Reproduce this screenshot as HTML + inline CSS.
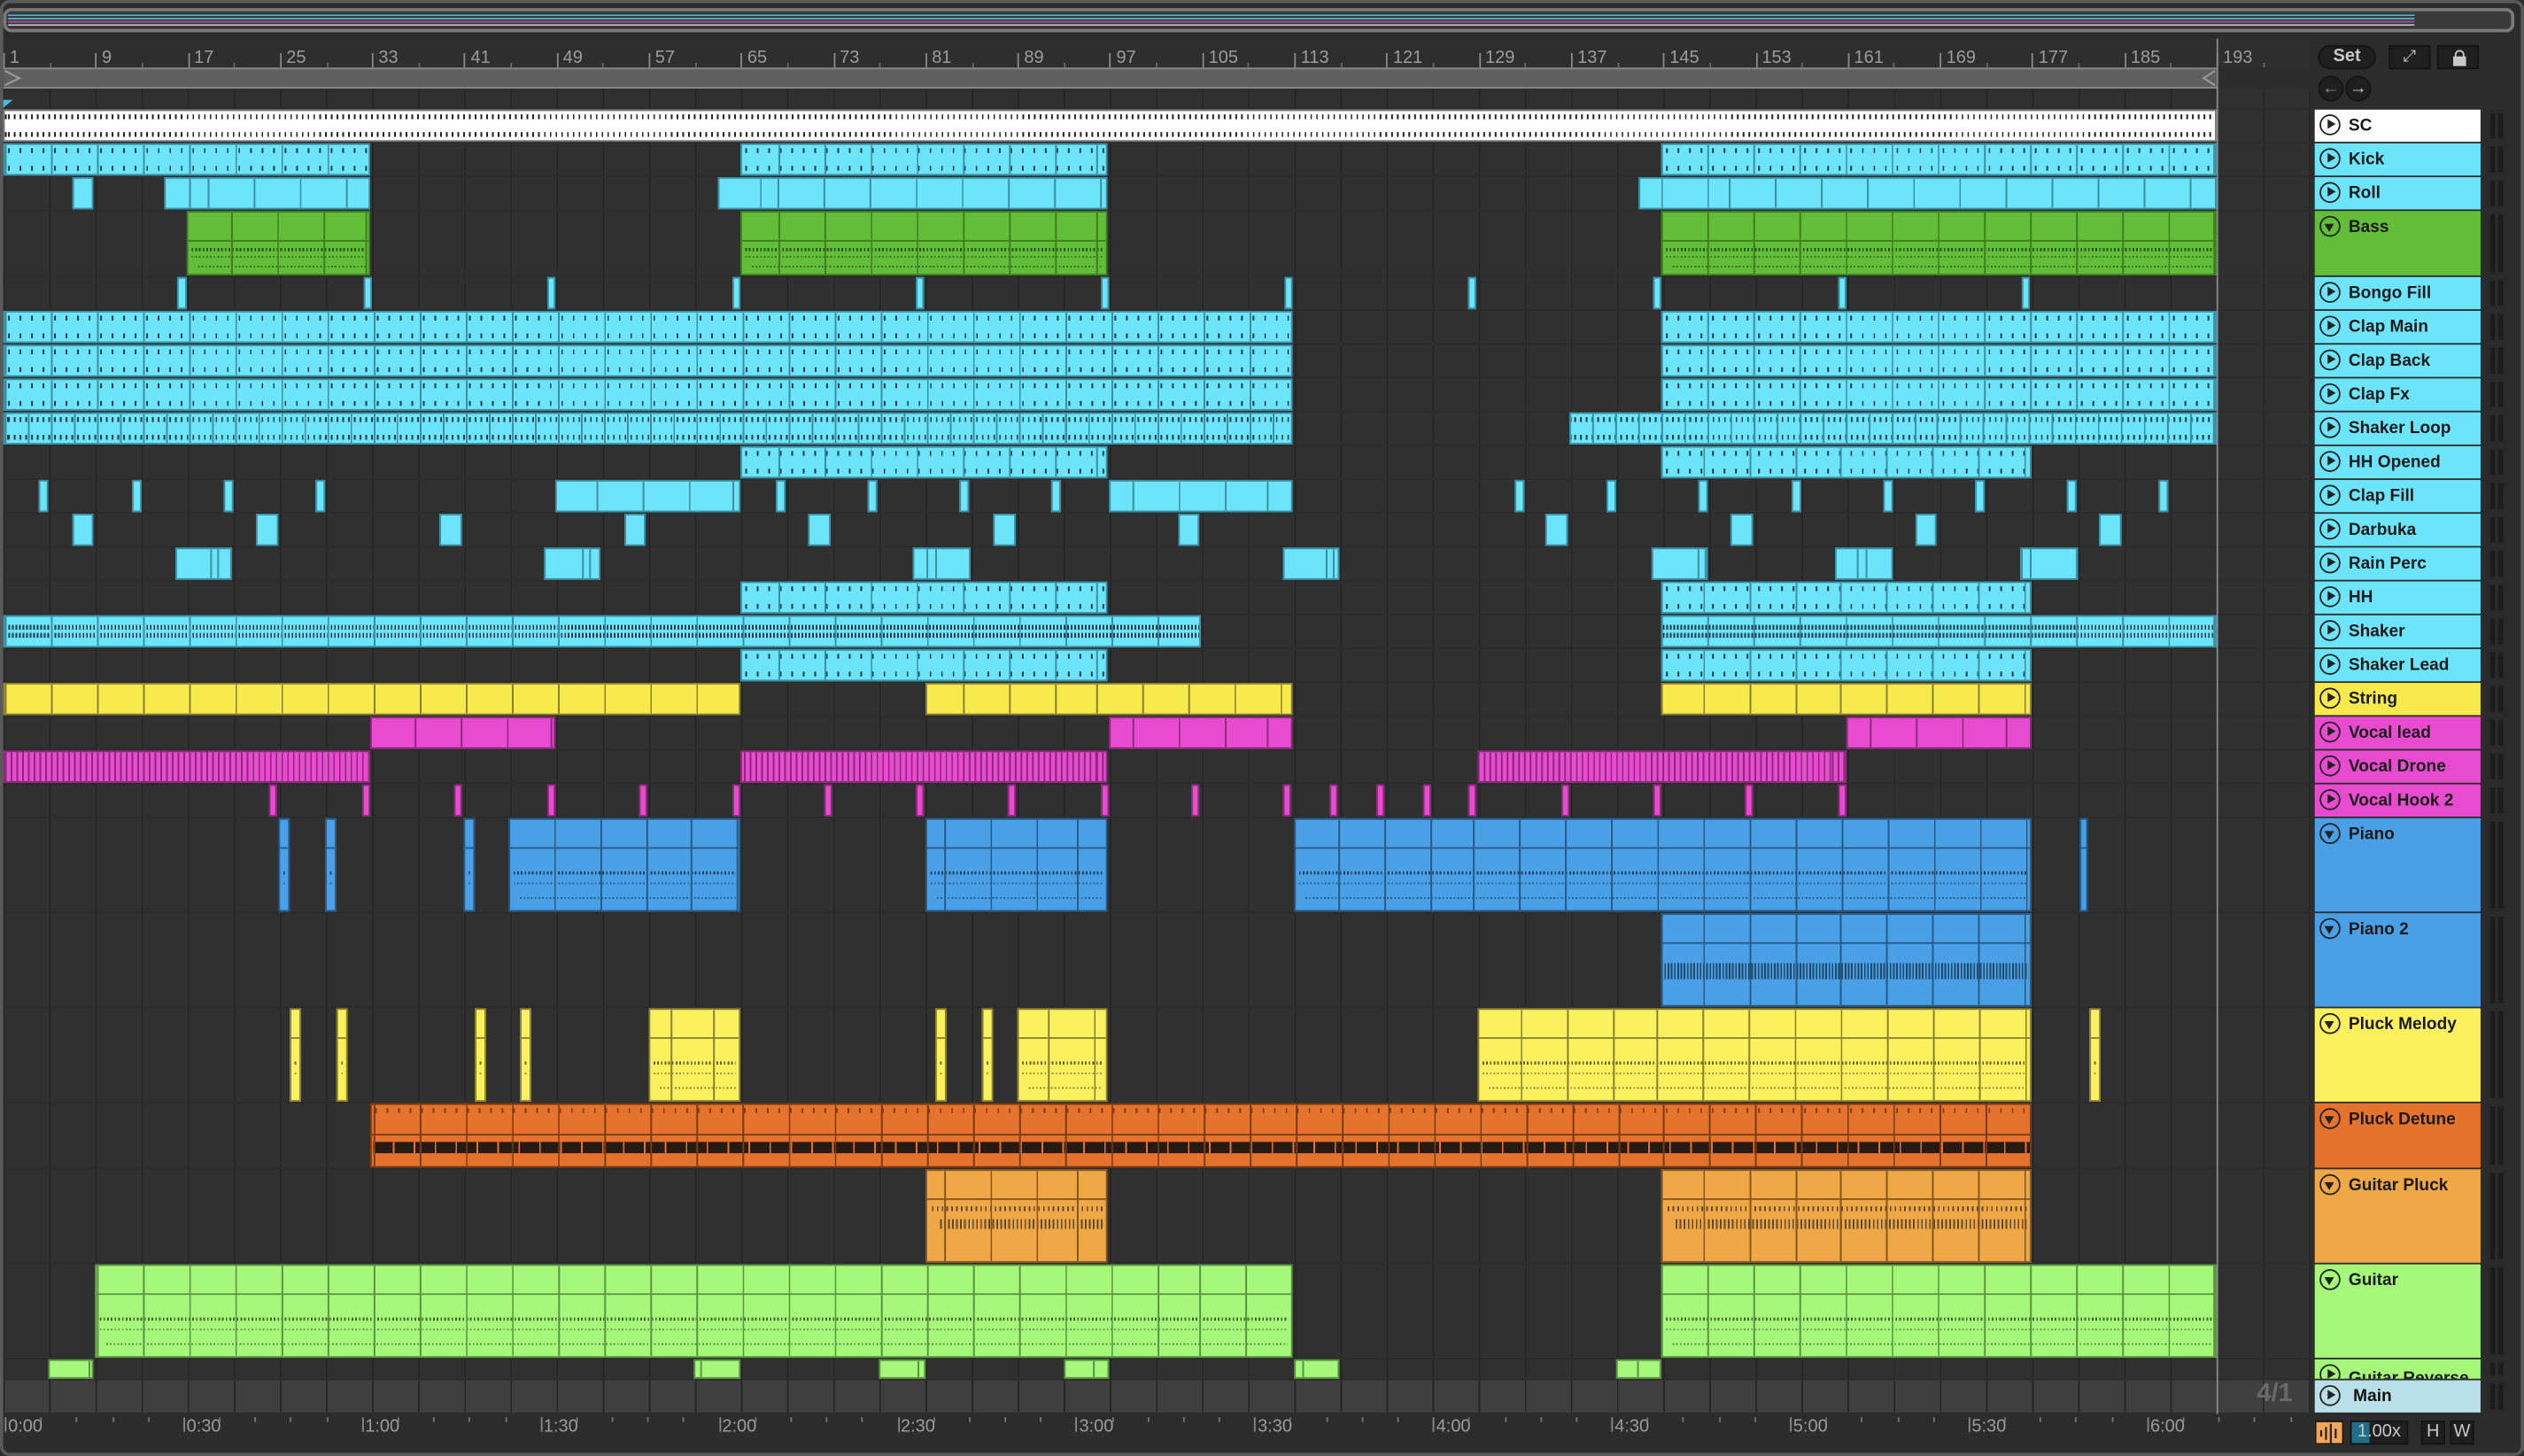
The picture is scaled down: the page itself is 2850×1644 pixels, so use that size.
<!DOCTYPE html>
<html><head><meta charset="utf-8">
<style>
*{box-sizing:border-box;margin:0;padding:0}
html,body{width:2850px;height:1644px;overflow:hidden;background:#262626}
#w{position:absolute;left:0;top:0;width:1568px;height:904px;transform:scale(1.81760,1.81858);transform-origin:0 0;background:#2c2c2c;font-family:"Liberation Sans",sans-serif;overflow:hidden}
.a{position:absolute}
.lane{position:absolute;left:2px;width:1433px;background-color:#303030;background-image:repeating-linear-gradient(90deg,#262626 0 1px,transparent 1px 28.645px)}
.clip{position:absolute;overflow:hidden}
.hd{position:absolute;left:1438px;width:103px;font-weight:bold;font-size:10.5px;color:#1a1a1a;padding-left:21px;line-height:20px;overflow:hidden}
.ic{position:absolute;left:3px;top:3px;width:13px;height:13px;border:1.3px solid #222;border-radius:50%}
.ic:after{content:"";position:absolute;left:3.5px;top:2.2px;border-left:5px solid #222;border-top:3.2px solid transparent;border-bottom:3.2px solid transparent}
.ic.d:after{left:2px;top:3.5px;border-top:5px solid #222;border-left:3.2px solid transparent;border-right:3.2px solid transparent;border-bottom:0}
.mt{position:absolute;left:1544px;width:13px;background:#2a2a2a}
.mt:before,.mt:after{content:"";position:absolute;top:2px;bottom:2px;width:3px;background:#1c1c1c;left:3px}
.mt:after{left:8px}
.rn{position:absolute;top:30px;font-size:11px;color:#9c9c9c}
.tk{position:absolute;width:1px;background:#8a8a8a}
.btn{position:absolute;background:#1f1f1f;border:1px solid #141414;color:#c8c8c8;font-size:11px;text-align:center}
</style></head><body><div id="w">
<!-- overview -->
<div class="a" style="left:2px;top:5px;width:1560px;height:15px;border:2px solid #7a7a7a;border-radius:5px;background:#3a3a3a"></div>
<div class="a" style="left:5px;top:8px;width:1495px;height:9px;background:linear-gradient(#3a3a3a 0 1px,#56b9cf 1px 2px,#3a3a3a 2px 3px,#4aa8c0 3px 4px,#3a3a3a 4px 5px,#a94a9c 5px 6px,#3a3a3a 6px 7px,#cfcfcf 7px 8px,#3a3a3a 8px 9px)"></div>
<!-- ruler -->
<div class="a" style="left:0;top:24px;width:1435px;height:18px;background:#2e2e2e"></div>
<div class="a" style="left:2px;top:42px;width:1375px;height:13px;background:#5f5f5f;border-top:1px solid #8a8a8a;border-bottom:1px solid #8a8a8a"></div>
<svg class="a" style="left:2px;top:43px" width="12" height="11"><path d="M1 1 L10 5.5 L1 10" fill="none" stroke="#999" stroke-width="1.2"/></svg>
<svg class="a" style="left:1367px;top:43px" width="10" height="11"><path d="M9 1 L2 5.5 L9 10" fill="none" stroke="#999" stroke-width="1.2"/></svg>
<div class="a" style="left:2px;top:55px;width:1433px;height:12px;background-color:#303030;background-image:repeating-linear-gradient(90deg,#262626 0 1px,transparent 1px 28.645px)"></div>
<div class="a" style="left:2px;top:62px;border-left:6px solid #4ab8d8;border-bottom:5px solid transparent"></div>
<div id="g"></div>
<!-- right column -->
<div class="a" style="left:1435px;top:24px;width:133px;height:44px;background:#2c2c2c"></div>
<div class="btn" style="left:1440px;top:28px;width:36px;height:15px;border-radius:8px;line-height:13px;font-weight:bold">Set</div>
<div class="btn" style="left:1484px;top:28px;width:26px;height:15px;line-height:13px;font-size:10px">⤢</div>
<div class="btn" style="left:1514px;top:28px;width:26px;height:15px"><div class="a" style="left:9px;top:6px;width:8px;height:6px;background:#c8c8c8"></div><div class="a" style="left:10px;top:2px;width:6px;height:6px;border:1.5px solid #c8c8c8;border-radius:3px 3px 0 0"></div></div>
<div class="btn" style="left:1440px;top:47px;width:16px;height:16px;border-radius:50%;line-height:14px;color:#888">←</div>
<div class="btn" style="left:1457px;top:47px;width:16px;height:16px;border-radius:50%;line-height:14px;font-weight:bold">→</div>
<div class="a" style="left:1402px;top:857px;font-size:16px;font-weight:bold;color:#6a6a6a">4/1</div>
<div class="a" style="left:1377px;top:24px;width:1px;height:856px;background:#8a8a8a"></div>
<!-- bottom -->
<div class="a" style="left:0;top:878px;width:1568px;height:26px;background:#2c2c2c"></div>
<div id="tb"></div>
<div class="a" style="left:1438px;top:882px;width:18px;height:15px;background:#f3a657;border:1px solid #141414"><svg width="16" height="13"><path d="M3 5v4M6 3v8M9 1v12M12 4v6" stroke="#222" stroke-width="1.2"/></svg></div>
<div class="btn" style="left:1460px;top:882px;width:36px;height:15px;line-height:13px;font-size:11px;background:linear-gradient(90deg,#1f6f86 0 11px,#1f1f1f 11px)">1.00x</div>
<div class="btn" style="left:1504px;top:882px;width:15px;height:15px;line-height:13px">H</div>
<div class="btn" style="left:1522px;top:882px;width:15px;height:15px;line-height:13px">W</div>
<div class="a" style="left:0;top:0;width:1568px;height:904px;border:2px solid #5a5a5a;border-radius:6px;pointer-events:none"></div>
</div>
<script>
var g=document.getElementById('g'),h='';
var B=57.29;
for(var k=0;k<=24;k++){var x=2+k*B;h+='<div class="tk" style="left:'+x+'px;top:33px;height:9px"></div><div class="rn" style="left:'+(x+4)+'px">'+(1+8*k)+'</div>';
 h+='<div class="tk" style="left:'+(x+B/2)+'px;top:39px;height:3px;background:#666"></div>';}
var C='#6ce4fa',CB='#3c8fa3',GR='#62bd38',GRB='#3f7f22',Y='#f8ea4c',YB='#8a8030',M='#e84bd0',MB='#8a2a7a',BL='#4aa0e6',BLB='#265a87',PY='#fbf05e',O='#e5732e',OB='#7a3a12',GP='#f0a746',GPB='#85561d',LG='#a6f87a',LGB='#5a9440';
var rows=[
['SC',68,20,'#ffffff','#777',[[2,1377]],'sc'],
['Kick',89,20,C,CB,[[2,230],[460,688],[1032,1377]],'k'],
['Roll',110,20,C,CB,[[45,58],[102,230],[446,688],[1018,1377]]],
['Bass',131,40,GR,GRB,[[116,230],[460,688],[1032,1377]],'tall'],
['Bongo Fill',172,20,C,CB,[[110,116],[226,231],[340,345],[455,460],[569,574],[684,689],[798,803],[912,917],[1027,1032],[1142,1147],[1256,1261]]],
['Clap Main',193,20,C,CB,[[2,803],[1032,1377]],'k'],
['Clap Back',214,20,C,CB,[[2,803],[1032,1377]],'k'],
['Clap Fx',235,20,C,CB,[[2,803],[1032,1377]],'k'],
['Shaker Loop',256,20,C,CB,[[2,803],[975,1377]],'k2'],
['HH Opened',277,20,C,CB,[[460,688],[1032,1262]],'k'],
['Clap Fill',298,20,C,CB,[[24,30],[82,88],[139,145],[196,202],[345,460],[482,488],[539,545],[596,602],[653,659],[689,803],[941,947],[998,1004],[1055,1061],[1113,1119],[1170,1176],[1227,1233],[1284,1290],[1341,1347]]],
['Darbuka',319,20,C,CB,[[45,58],[159,173],[273,287],[388,401],[502,516],[617,631],[732,745],[960,974],[1075,1089],[1190,1203],[1304,1318]]],
['Rain Perc',340,20,C,CB,[[109,144],[338,373],[567,603],[797,832],[1026,1061],[1140,1176],[1255,1291]]],
['HH',361,20,C,CB,[[460,688],[1032,1262]],'k'],
['Shaker',382,20,C,CB,[[2,746],[1032,1377]],'sh'],
['Shaker Lead',403,20,C,CB,[[460,688],[1032,1262]],'k'],
['String',424,20,Y,YB,[[2,460],[575,803],[1032,1262]]],
['Vocal lead',445,20,M,MB,[[230,345],[689,803],[1147,1262]]],
['Vocal Drone',466,20,M,MB,[[2,230],[460,688],[918,1147]],'vd'],
['Vocal Hook 2',487,20,M,MB,[[167,172],[225,230],[282,287],[340,345],[397,402],[455,460],[512,517],[569,574],[626,631],[684,689],[740,745],[797,802],[826,831],[855,860],[884,889],[912,917],[970,975],[1027,1032],[1084,1089],[1142,1147]]],
['Piano',508,58,BL,BLB,[[173,180],[202,209],[288,295],[316,460],[575,688],[804,1262],[1292,1297]],'tall'],
['Piano 2',567,58,BL,BLB,[[1032,1262]],'tall2'],
['Pluck Melody',626,58,PY,YB,[[180,187],[209,216],[295,302],[323,330],[403,460],[581,588],[610,617],[632,688],[918,1262],[1298,1305]],'tall'],
['Pluck Detune',685,40,O,OB,[[230,1262]],'pd'],
['Guitar Pluck',726,58,GP,GPB,[[575,688],[1032,1262]],'tall3'],
['Guitar',785,58,LG,LGB,[[59,803],[1032,1377]],'tall'],
['Guitar Reverse',844,12,LG,LGB,[[30,58],[431,460],[546,575],[661,689],[804,832],[1004,1032]]]
];
var hdr='';
function tickStrip(pos,step,col){return '<div class="a" style="left:0;right:0;'+pos+';height:3px;background:repeating-linear-gradient(90deg,'+col+' 0 1px,transparent 1px '+step+'px);background-position:2px 0"></div>';}
rows.forEach(function(r){
 var n=r[0],t=r[1],H=r[2],c=r[3],bc=r[4],cl=r[5],st=r[6]||'';
 h+='<div class="lane" style="top:'+t+'px;height:'+H+'px"></div>';
 cl.forEach(function(p){
  var l=p[0],w=p[1]-p[0],off=(2-l);
  var img=[];
  if(w>20) img.push('repeating-linear-gradient(90deg,'+bc+' 0 1px,transparent 1px 28.645px)');
  var inner='';
  if(st=='sc'){img=[];inner=tickStrip('top:2px','3.58','#222')+tickStrip('bottom:2px','3.58','#222');}
  if(st=='k'){inner=tickStrip('top:2px','7.16','#1f3a44')+tickStrip('bottom:2px','7.16','#1f3a44');}
  if(st=='k2'){img.unshift('repeating-linear-gradient(90deg,'+bc+' 0 1px,transparent 1px 14.32px)');inner=tickStrip('top:2px','3.58','#1f3a44')+tickStrip('bottom:2px','3.58','#1f3a44');}
  if(st=='sh'){inner='<div class="a" style="left:0;top:5px;right:0;height:3px;background:repeating-linear-gradient(90deg,#1f3a44 0 1px,transparent 1px 2.2px)"></div><div class="a" style="left:0;bottom:5px;right:0;height:3px;background:repeating-linear-gradient(90deg,#1f3a44 0 1px,transparent 1px 2.2px)"></div>';}
  if(st=='vd'){img.unshift('repeating-linear-gradient(90deg,'+bc+' 0 1px,transparent 1px 3.58px)');}
  if(st.indexOf('tall')==0){
   var pat='repeating-linear-gradient(90deg,rgba(0,0,0,.6) 0 1px,transparent 1px 2.3px)';
   inner='<div class="a" style="left:0;right:0;top:17px;height:1px;background:'+bc+'"></div>'+
   '<div class="a" style="left:2px;right:2px;top:'+(H*0.55)+'px;height:2px;background:'+pat+'"></div>'+
   '<div class="a" style="left:2px;right:2px;top:'+(H*0.68)+'px;height:1px;background:'+pat+';opacity:.7"></div>'+
   '<div class="a" style="left:6px;right:2px;top:'+(H*0.82)+'px;height:1px;background:'+pat+';opacity:.8"></div>';
   if(st=='tall2') inner='<div class="a" style="left:0;right:0;top:17px;height:1px;background:'+bc+'"></div><div class="a" style="left:1px;right:1px;top:30px;height:10px;background:repeating-linear-gradient(90deg,rgba(0,0,0,.55) 0 1px,transparent 1px 2px);"></div>';
   if(st=='tall3') inner='<div class="a" style="left:0;right:0;top:17px;height:1px;background:'+bc+'"></div><div class="a" style="left:3px;right:2px;top:22px;height:3px;background:repeating-linear-gradient(90deg,#222 0 1px,transparent 1px 3px);opacity:.7"></div><div class="a" style="left:8px;right:2px;top:30px;height:6px;background:repeating-linear-gradient(90deg,#222 0 1px,transparent 1px 2.5px);opacity:.7"></div>';
  }
  if(st=='pd'){inner='<div class="a" style="left:0;right:0;top:18px;height:1px;background:'+bc+'"></div><div class="a" style="left:0;right:0;top:23px;height:7px;background:#271a12"></div><div class="a" style="left:0;right:0;top:23px;height:7px;background:repeating-linear-gradient(90deg,'+c+' 0 1px,transparent 1px 13px)"></div>'+tickStrip('top:2px','7.16',OB);}
  h+='<div class="clip" style="left:'+l+'px;top:'+t+'px;width:'+w+'px;height:'+H+'px;background-color:'+c+';border:1px solid '+bc+';">'+inner+(img.length?'<div class="a" style="left:0;top:0;right:0;bottom:0;background-image:'+img.join(',')+';background-position:'+off+'px 0"></div>':'')+'</div>';
 });
 if(n=='Guitar Reverse'){
  hdr+='<div class="hd" style="top:844px;height:12px;background:'+LG+';line-height:24px"><div class="ic" style="top:3px"></div>Guitar Reverse</div><div class="mt" style="top:844px;height:12px"></div>';
 } else {
 hdr+='<div class="hd" style="top:'+t+'px;height:'+H+'px;background:'+c+'"><div class="ic'+(H>20?' d':'')+'"></div>'+n+'</div><div class="mt" style="top:'+t+'px;height:'+H+'px"></div>';}
});
h+='<div class="lane" style="top:857px;height:20px;background-color:#3f3f3f"></div>';
hdr+='<div class="hd" style="top:857px;height:20px;background:#b9dfe9;color:#111"><div class="ic"></div>&nbsp;Main</div><div class="mt" style="top:857px;height:20px"></div>';
g.innerHTML=h+hdr;
var tb='',lab=['0:00','0:30','1:00','1:30','2:00','2:30','3:00','3:30','4:00','4:30','5:00','5:30','6:00'];
for(var i=0;i<lab.length;i++){var x=3+i*110.9;tb+='<div class="a" style="left:'+x+'px;top:880px;width:1px;height:9px;background:#888"></div><div class="a" style="left:'+(x+2)+'px;top:880px;font-size:11px;color:#9c9c9c">'+lab[i]+'</div>';
 for(var j=1;j<5;j++)tb+='<div class="a" style="left:'+(x+j*22.18)+'px;top:880px;width:1px;height:3px;background:#777"></div>';}
document.getElementById('tb').innerHTML=tb;
</script>
</body></html>
